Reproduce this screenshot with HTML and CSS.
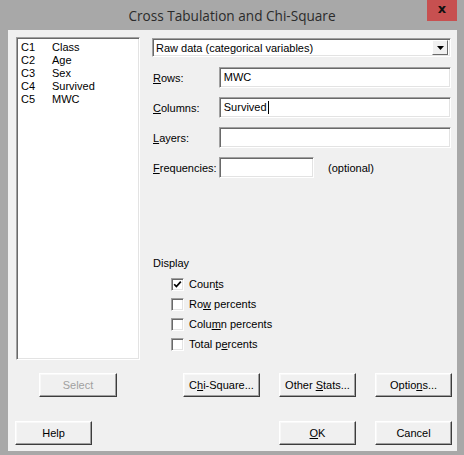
FILE: index.html
```html
<!DOCTYPE html>
<html>
<head>
<meta charset="utf-8">
<link rel="stylesheet" href="styles.css">
</head>
<body>
<div class="window">
  <div class="titlebar">
    <span></span>
    <span class="title">Cross Tabulation and Chi-Square</span>
    <div class="close">x</div>
  </div>
  <div class="client">
    <div class="top">
      <div class="listbox sunken">
        <div class="item"><span class="cid">C1</span><span>Class</span></div>
        <div class="item"><span class="cid">C2</span><span>Age</span></div>
        <div class="item"><span class="cid">C3</span><span>Sex</span></div>
        <div class="item"><span class="cid">C4</span><span>Survived</span></div>
        <div class="item"><span class="cid">C5</span><span>MWC</span></div>
      </div>
      <div class="panel">
        <div class="combo sunken">
          <span class="combo-text">Raw data (categorical variables)</span>
          <div class="combo-btn">
            <svg width="7" height="4" viewBox="0 0 7 4"><polygon points="0,0 7,0 3.5,4" fill="#000"/></svg>
          </div>
        </div>
        <div class="field first">
          <span class="label"><u>R</u>ows:</span>
          <div class="input sunken"><span>MWC</span></div>
        </div>
        <div class="field">
          <span class="label"><u>C</u>olumns:</span>
          <div class="input sunken"><span>Survived</span><span class="caret"></span></div>
        </div>
        <div class="field">
          <span class="label"><u>L</u>ayers:</span>
          <div class="input sunken"></div>
        </div>
        <div class="field">
          <span class="label"><u>F</u>requencies:</span>
          <div class="input short sunken"></div>
          <span class="optional">(optional)</span>
        </div>
        <div class="display-label">Display</div>
        <div class="checks">
          <div class="check">
            <span class="box sunken"><svg width="9" height="9" viewBox="0 0 9 9"><polyline points="1.2,4.2 3.4,6.6 7.8,1.6" fill="none" stroke="#000" stroke-width="1.7"/></svg></span>
            <span>Coun<u>t</u>s</span>
          </div>
          <div class="check">
            <span class="box sunken"></span>
            <span>Ro<u>w</u> percents</span>
          </div>
          <div class="check">
            <span class="box sunken"></span>
            <span>Colu<u>m</u>n percents</span>
          </div>
          <div class="check">
            <span class="box sunken"></span>
            <span>Total p<u>e</u>rcents</span>
          </div>
        </div>
      </div>
    </div>
    <div class="btnrow row1">
      <div class="btn select disabled"><span>Select</span></div>
      <div class="btn chi"><span>C<u>h</u>i-Square...</span></div>
      <div class="btn gap"><span>Other <u>S</u>tats...</span></div>
      <div class="btn gap"><span>Optio<u>n</u>s...</span></div>
    </div>
    <div class="btnrow row2">
      <div class="btn help"><span>Help</span></div>
      <div class="btn ok"><span><u>O</u>K</span></div>
      <div class="btn gap"><span>Cancel</span></div>
    </div>
  </div>
</div>
</body>
</html>
```

FILE: styles.css
```css
html, body {
  margin: 0;
  padding: 0;
}
body {
  width: 464px;
  height: 455px;
  overflow: hidden;
  font-family: "Liberation Sans", Arial, sans-serif;
  font-size: 11px;
  color: #000;
}
.window {
  width: 464px;
  height: 455px;
  background: #a8a8a8;
  box-sizing: border-box;
}
.titlebar {
  height: 30px;
  display: grid;
  grid-template-columns: 1fr auto 1fr;
  align-items: start;
}
.title {
  font-family: "Open Sans", "Noto Sans", sans-serif;
  font-size: 13.6px;
  color: #2b2b2b;
  line-height: 31px;
}
.close {
  justify-self: end;
  margin-right: 7px;
  width: 30px;
  height: 21px;
  background: #c75050;
  color: #111;
  font-family: "DejaVu Sans", sans-serif;
  font-weight: bold;
  font-size: 13px;
  line-height: 18px;
  text-align: center;
}
.client {
  margin-left: 8px;
  width: 449px;
  height: 421px;
  background: #f0f0f0;
  overflow: hidden;
}
.sunken {
  box-sizing: border-box;
  background: #fff;
  border: 1px solid;
  border-color: #a0a0a0 #ffffff #ffffff #a0a0a0;
  box-shadow: inset 1px 1px 0 #696969, inset -1px -1px 0 #e3e3e3;
}
.top {
  display: flex;
  align-items: flex-start;
  margin: 7px 0 0 8px;
}
.listbox {
  width: 124px;
  height: 323px;
  padding: 3px 0 0 4px;
}
.item {
  display: flex;
  height: 13px;
  line-height: 13px;
}
.cid {
  width: 31px;
}
.panel {
  margin-left: 12px;
  margin-top: 1px;
  width: 299px;
}
.combo {
  height: 19px;
  display: flex;
  align-items: center;
  padding: 0 2px 0 3px;
}
.combo-text {
  flex: 1;
}
.combo-btn {
  width: 16px;
  height: 15px;
  box-sizing: border-box;
  background: #f0f0f0;
  border: 1px solid;
  border-color: #ffffff #696969 #696969 #ffffff;
  display: flex;
  align-items: center;
  justify-content: center;
}
.field {
  display: flex;
  align-items: center;
  margin-top: 9px;
  height: 21px;
}
.field.first {
  margin-top: 10px;
}
.label {
  width: 67px;
  padding-left: 1px;
  box-sizing: border-box;
}
.input {
  width: 233px;
  height: 21px;
  padding: 0 4px;
  line-height: 19px;
  display: flex;
  align-items: center;
}
.input.short {
  width: 95px;
}
.caret {
  display: inline-block;
  width: 1px;
  height: 13px;
  background: #000;
  margin-left: 1px;
}
.optional {
  margin-left: 14px;
}
.display-label {
  margin-top: 78px;
  line-height: 14px;
  padding-left: 1px;
}
.checks {
  margin-top: 4px;
  padding-left: 19px;
}
.check {
  display: flex;
  align-items: center;
  height: 20px;
}
.box {
  width: 13px;
  height: 13px;
  margin-right: 5px;
  display: flex;
  align-items: center;
  justify-content: center;
}
.btnrow {
  display: flex;
}
.row1 {
  margin-top: 13px;
  padding-left: 31px;
}
.row2 {
  margin-top: 24px;
  padding-left: 7px;
}
.btn {
  width: 77px;
  height: 24px;
  box-sizing: border-box;
  background: #f0f0f0;
  border: 1px solid;
  border-color: #ffffff #3c3c3c #3c3c3c #ffffff;
  box-shadow: inset -1px -1px 0 #a0a0a0, inset 1px 1px 0 #f8f8f8;
  display: flex;
  align-items: center;
  justify-content: center;
  line-height: 13px;
}
.btn.select {
  width: 78px;
}
.btn.disabled {
  color: #a0a0a0;
}
.btn.chi {
  margin-left: 66px;
}
.btn.gap {
  margin-left: 19px;
}
.btn.ok {
  margin-left: 187px;
}
```
